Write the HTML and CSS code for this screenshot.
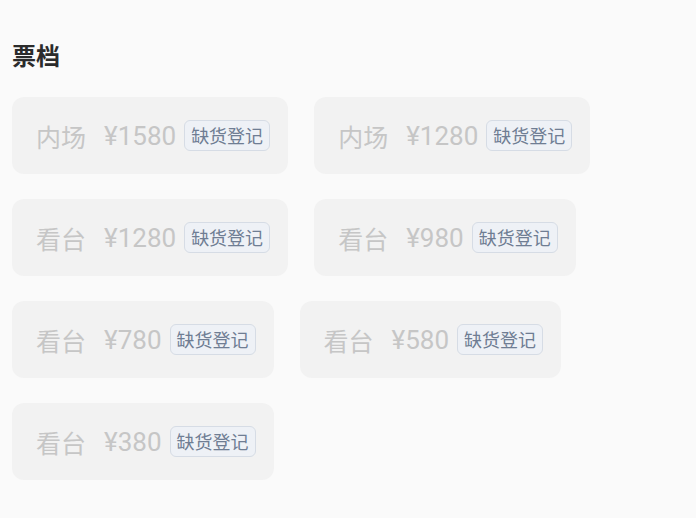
FILE: index.html
```html
<!DOCTYPE html>
<html lang="zh-CN">
<head>
  <meta charset="UTF-8">
  <meta name="viewport" content="width=device-width, initial-scale=1.0">
  <title>票档</title>
  <link rel="stylesheet" href="styles.css">
</head>
<body>
  <div class="section">
    <h2 class="section-title">票档</h2>
    <div class="tiers">
      <div class="tier">
        <span class="tier-name">内场</span>
        <span class="tier-price">¥1580</span>
        <span class="tier-tag">缺货登记</span>
      </div>
      <div class="tier">
        <span class="tier-name">内场</span>
        <span class="tier-price">¥1280</span>
        <span class="tier-tag">缺货登记</span>
      </div>
      <div class="tier">
        <span class="tier-name">看台</span>
        <span class="tier-price">¥1280</span>
        <span class="tier-tag">缺货登记</span>
      </div>
      <div class="tier">
        <span class="tier-name">看台</span>
        <span class="tier-price">¥980</span>
        <span class="tier-tag">缺货登记</span>
      </div>
      <div class="tier">
        <span class="tier-name">看台</span>
        <span class="tier-price">¥780</span>
        <span class="tier-tag">缺货登记</span>
      </div>
      <div class="tier">
        <span class="tier-name">看台</span>
        <span class="tier-price">¥580</span>
        <span class="tier-tag">缺货登记</span>
      </div>
      <div class="tier">
        <span class="tier-name">看台</span>
        <span class="tier-price">¥380</span>
        <span class="tier-tag">缺货登记</span>
      </div>
    </div>
  </div>
</body>
</html>
```

FILE: styles.css
```css
body {
  margin: 0;
  background-color: #fafafa;
  font-family: Roboto, "Noto Sans CJK SC", sans-serif;
}
.section {
  padding: 36px 12px 0;
}
.section-title {
  margin: 0 0 23px;
  font-family: "Noto Sans CJK SC", sans-serif;
  font-size: 24px;
  line-height: 38px;
  font-weight: 700;
  color: #2b2b2b;
}
.tiers {
  display: flex;
  flex-wrap: wrap;
  gap: 25px 26px;
  width: 600px;
}
.tier {
  display: flex;
  align-items: center;
  height: 77px;
  padding: 0 18px 0 24px;
  background-color: #f2f2f2;
  border-radius: 12px;
  color: #c6c6c6;
}
.tier-name {
  font-family: "Noto Sans CJK SC", sans-serif;
  font-size: 25px;
  margin-right: 18px;
}
.tier-price {
  font-size: 26px;
  margin-right: 8px;
}
.tier-tag {
  font-family: "Noto Sans CJK SC", sans-serif;
  font-size: 18px;
  line-height: 29px;
  padding: 0 6px;
  color: #6f7d93;
  background-color: #eef1f6;
  border: 1px solid #d6dce5;
  border-radius: 6px;
}
```
